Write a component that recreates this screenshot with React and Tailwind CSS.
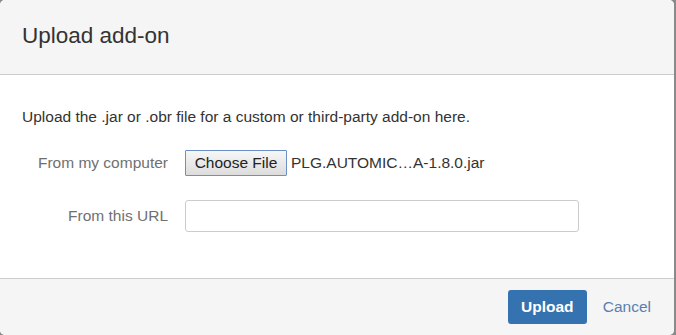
export default function App() {
  const font = { fontFamily: '"Liberation Sans", Arial, sans-serif' };
  return (
    <div className="w-[676px] h-[335px] bg-[#8a8a8a] overflow-hidden" style={font}>
      <div className="w-[674px] h-[335px] bg-white rounded-[5px] flex flex-col overflow-hidden">
        <div className="h-[75px] shrink-0 bg-[#f5f5f5] border-b border-[#cccccc] flex items-center px-[22px]">
          <h2 className="text-[22.5px] text-[#333333] leading-none pb-[2px]">Upload add-on</h2>
        </div>
        <div className="flex-1 px-[22px] pt-[33px]">
          <p className="text-[15.5px] text-[#333333] leading-[18px]">
            Upload the .jar or .obr file for a custom or third-party add-on here.
          </p>
          <div className="flex items-center mt-[24px] h-[26px]">
            <div className="w-[146px] text-right text-[15.5px] text-[#707070] whitespace-nowrap">From my computer</div>
            <div className="ml-[17px] flex items-center">
              <button className="h-[26px] w-[102px] text-[15.5px] text-[#222] bg-gradient-to-b from-[#f7f7f7] to-[#dcdcdc] border border-[#6b8fc7] rounded-[1px] whitespace-nowrap">
                Choose File
              </button>
              <span className="ml-[4px] text-[15.5px] text-[#333333] whitespace-nowrap">PLG.AUTOMIC…A-1.8.0.jar</span>
            </div>
          </div>
          <div className="flex items-center mt-[24px]">
            <div className="w-[146px] text-right text-[15.5px] text-[#707070]">From this URL</div>
            <input
              type="text"
              className="ml-[17px] w-[394px] h-[32px] border border-[#cccccc] rounded-[3px] bg-white"
            />
          </div>
        </div>
        <div className="h-[57px] shrink-0 bg-[#f5f5f5] border-t border-[#cccccc] flex items-center justify-end pr-[23px]">
          <button className="h-[34px] w-[79px] bg-[#3572b0] text-white font-bold text-[15.5px] rounded-[3px]">
            Upload
          </button>
          <span className="ml-[16px] text-[15.5px] text-[#5a7fb0]">Cancel</span>
        </div>
      </div>
    </div>
  );
}
